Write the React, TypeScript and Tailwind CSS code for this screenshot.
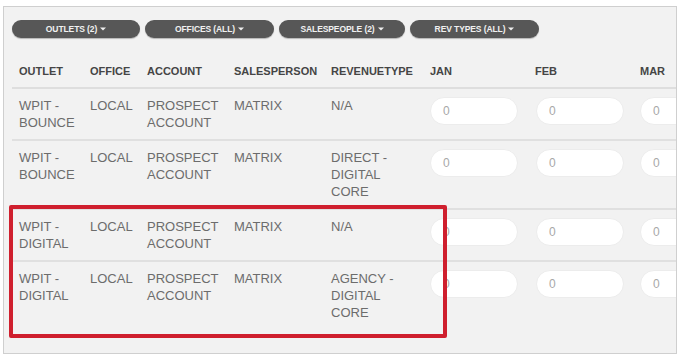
const filters = [
  { label: 'OUTLETS (2)', w: 'w-[128px]' },
  { label: 'OFFICES (ALL)', w: 'w-[129px]' },
  { label: 'SALESPEOPLE (2)', w: 'w-[126px]' },
  { label: 'REV TYPES (ALL)', w: 'w-[129px]' },
];

const headers = ['OUTLET', 'OFFICE', 'ACCOUNT', 'SALESPERSON', 'REVENUETYPE', 'JAN', 'FEB', 'MAR'];

const rows = [
  { outlet: ['WPIT -', 'BOUNCE'], rev: ['N/A'] },
  { outlet: ['WPIT -', 'BOUNCE'], rev: ['DIRECT -', 'DIGITAL', 'CORE'] },
  { outlet: ['WPIT -', 'DIGITAL'], rev: ['N/A'] },
  { outlet: ['WPIT -', 'DIGITAL'], rev: ['AGENCY -', 'DIGITAL', 'CORE'] },
];

const cols = 'grid grid-cols-[71px_57px_87px_97px_99px_105px_105px_105px]';

function Caret() {
  return (
    <svg width="6" height="4" viewBox="0 0 6 4" className="ml-[3px]">
      <path d="M0 0.5h6L3 3.5z" fill="#f0f0f0" />
    </svg>
  );
}

function Lines({ items }: { items: string[] }) {
  return (
    <div>
      {items.map((t, i) => (
        <div key={i}>{t}</div>
      ))}
    </div>
  );
}

function ZeroInput() {
  return (
    <div className="h-[28px] w-[88px] rounded-full bg-white border border-[#ececec] flex items-center pl-[12px] text-[12px] text-[#a8a8a8]">
      0
    </div>
  );
}

export default function App() {
  return (
    <div className="w-[687px] h-[364px] bg-white pt-[6px] pl-[3px] font-['Liberation_Sans',Arial,sans-serif]">
      <div className="relative w-[674px] h-[348px] border border-[#cfcfcf] bg-[#f2f2f2] overflow-hidden">
        <div className="flex gap-[5px] pl-[8px] pt-[13px]">
          {filters.map(f => (
            <div
              key={f.label}
              className={`${f.w} h-[18px] rounded-full bg-[#575757] shadow-[0_1px_1px_rgba(0,0,0,0.25)] flex items-center justify-center text-[8.5px] font-bold text-[#f0f0f0] tracking-[-0.1px]`}
            >
              {f.label}
              <Caret />
            </div>
          ))}
        </div>

        <div className="ml-[8px] mt-[17px] w-[800px]">
          <div className={`${cols} border-b-2 border-[#dedede] pt-[8px] pb-[7px] text-[11px] leading-[17px] font-bold text-[#454545]`}>
            {headers.map(h => (
              <div key={h} className="pl-[7px]">{h}</div>
            ))}
          </div>

          {rows.map((r, i) => (
            <div
              key={i}
              className={`${cols} py-[8px] text-[13px] leading-[17px] text-[#6c6c6c] ${i < rows.length - 1 ? 'border-b-2 border-[#e0e0e0]' : ''}`}
            >
              <div className="pl-[7px]"><Lines items={r.outlet} /></div>
              <div className="pl-[7px]">LOCAL</div>
              <div className="pl-[7px]"><Lines items={['PROSPECT', 'ACCOUNT']} /></div>
              <div className="pl-[7px]">MATRIX</div>
              <div className="pl-[7px]"><Lines items={r.rev} /></div>
              <div className="pl-[7px]"><ZeroInput /></div>
              <div className="pl-[8px]"><ZeroInput /></div>
              <div className="pl-[7px]"><ZeroInput /></div>
            </div>
          ))}
        </div>

        <div className="absolute left-[5px] top-[198px] w-[438px] h-[133px] border-[4px] border-[#cf1f2e] rounded-[2px]" />
      </div>
    </div>
  );
}
